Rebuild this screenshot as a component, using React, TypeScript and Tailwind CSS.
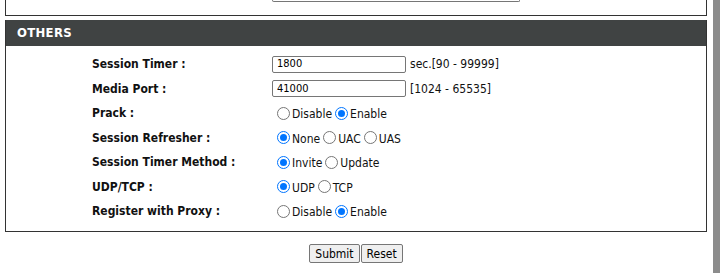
import type { ReactNode } from 'react';

const font = { fontFamily: 'Tahoma, "DejaVu Sans Condensed", "Liberation Sans", sans-serif' };

function Radio({ checked, label }: { checked?: boolean; label: string }) {
  return (
    <span className="inline-flex items-center mr-[3px]">
      {checked ? (
        <span className="w-[13px] h-[13px] rounded-full border-[1.5px] border-[#0075ff] flex items-center justify-center bg-white">
          <span className="w-[7px] h-[7px] rounded-full bg-[#0075ff]" />
        </span>
      ) : (
        <span className="w-[13px] h-[13px] rounded-full border border-[#767676] bg-white" />
      )}
      <span className="ml-[2px] mt-[2px]">{label}</span>
    </span>
  );
}

function Row({ label, children }: { label: string; children: ReactNode }) {
  return (
    <div className="flex items-center h-[24.5px]">
      <div className="w-[180px] shrink-0 font-bold text-[12px] text-[#111]">{label}</div>
      <div className="flex items-center text-[12px] text-[#111]">{children}</div>
    </div>
  );
}

function TextBox({ value }: { value: string }) {
  return (
    <div className="w-[134px] h-[17px] border border-[#767676] rounded-[2px] bg-white px-[4px] flex items-center text-[11px] text-black">
      {value}
    </div>
  );
}

export default function App() {
  return (
    <div className="flex w-[720px] h-[273px] overflow-hidden bg-white" style={font}>
      <div className="flex-1 min-w-0">
        <div className="ml-[5px] w-[702px] h-[16px] border-x border-b border-[#333] relative">
          <div className="absolute left-[266px] top-0 w-[248px] h-[2px] border-x border-b border-[#767676] rounded-b-[2px]" />
        </div>
        <div className="ml-[5px] mt-[4px] w-[702px] h-[212px] border border-[#333] border-t-0">
          <div className="h-[26px] bg-[#404343] flex items-center pl-[11px] text-white font-bold text-[13px] tracking-[0.3px]">
            OTHERS
          </div>
          <div className="pl-[86px] pt-[6px]">
            <Row label="Session Timer :">
              <TextBox value="1800" />
              <span className="ml-[4px]">sec.[90 - 99999]</span>
            </Row>
            <Row label="Media Port :">
              <TextBox value="41000" />
              <span className="ml-[4px]">[1024 - 65535]</span>
            </Row>
            <Row label="Prack :">
              <span className="ml-[5px] flex items-center">
                <Radio label="Disable" />
                <Radio checked label="Enable" />
              </span>
            </Row>
            <Row label="Session Refresher :">
              <span className="ml-[5px] flex items-center">
                <Radio checked label="None" />
                <Radio label="UAC" />
                <Radio label="UAS" />
              </span>
            </Row>
            <Row label="Session Timer Method :">
              <span className="ml-[5px] flex items-center">
                <Radio checked label="Invite" />
                <Radio label="Update" />
              </span>
            </Row>
            <Row label="UDP/TCP :">
              <span className="ml-[5px] flex items-center">
                <Radio checked label="UDP" />
                <Radio label="TCP" />
              </span>
            </Row>
            <Row label="Register with Proxy :">
              <span className="ml-[5px] flex items-center">
                <Radio label="Disable" />
                <Radio checked label="Enable" />
              </span>
            </Row>
          </div>
        </div>
        <div className="ml-[5px] w-[702px] flex justify-center mt-[12px]">
          <button type="button" className="h-[19px] px-[5px] border border-[#767676] rounded-[2px] bg-[#efefef] text-[12px] text-black">
            Submit
          </button>
          <button type="button" className="h-[19px] px-[5px] ml-[1px] border border-[#767676] rounded-[2px] bg-[#efefef] text-[12px] text-black">
            Reset
          </button>
        </div>
      </div>
      <div className="w-[7px] shrink-0 bg-[#8c8c8c]" />
    </div>
  );
}
